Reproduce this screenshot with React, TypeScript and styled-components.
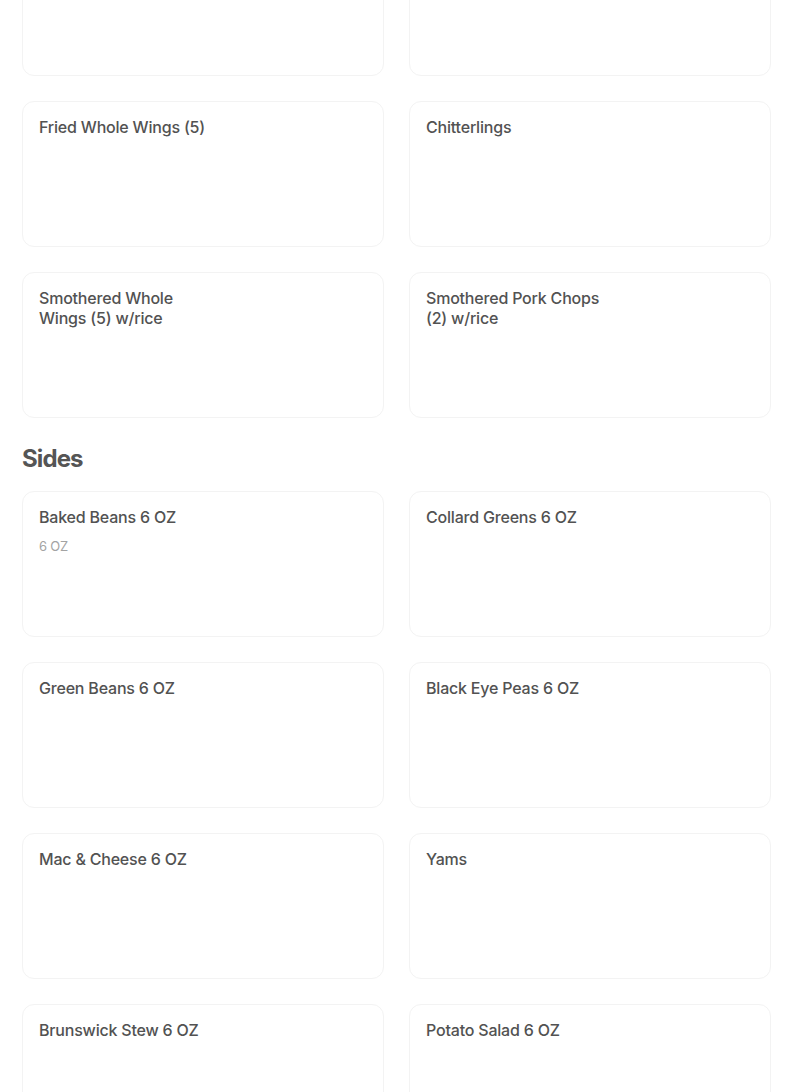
import React from "react";
import styled, { createGlobalStyle } from "styled-components";

const Global = createGlobalStyle`
  html, body { margin: 0; padding: 0; background: #ffffff; }
  body { font-family: Inter, "Noto Sans", Arial, sans-serif; overflow: hidden; }
`;

const Page = styled.div`
  padding: 0 33px 0 22px;
  margin-top: -70px;
  display: flex;
  flex-direction: column;
`;

const Grid = styled.div`
  display: grid;
  grid-template-columns: 1fr 1fr;
  column-gap: 25px;
  row-gap: 25px;
`;

const Card = styled.div`
  box-sizing: border-box;
  height: 146px;
  border: 1px solid #f3f3f3;
  border-radius: 12px;
  padding: 15px 16px;
  display: flex;
  flex-direction: column;
  gap: 11px;
  background: #fff;
`;

const Title = styled.div`
  font-size: 16px;
  line-height: 20px;
  font-weight: 500;
  color: #525252;
  letter-spacing: -0.2px;
  max-width: 180px;
`;

const Sub = styled.div`
  font-size: 13px;
  line-height: 16px;
  color: #a3a3a3;
  letter-spacing: -0.2px;
`;

const Heading = styled.h2`
  margin: 25px 0 16px;
  font-size: 24px;
  line-height: 32px;
  font-weight: 700;
  color: #555555;
  letter-spacing: -0.9px;
`;

type Item = { title: string; sub?: string };

const top: Item[] = [
  { title: "" },
  { title: "" },
  { title: "Fried Whole Wings (5)" },
  { title: "Chitterlings" },
  { title: "Smothered Whole Wings (5) w/rice" },
  { title: "Smothered Pork Chops (2) w/rice" },
];

const sides: Item[] = [
  { title: "Baked Beans 6 OZ", sub: "6 OZ" },
  { title: "Collard Greens 6 OZ" },
  { title: "Green Beans 6 OZ" },
  { title: "Black Eye Peas 6 OZ" },
  { title: "Mac & Cheese 6 OZ" },
  { title: "Yams" },
  { title: "Brunswick Stew 6 OZ" },
  { title: "Potato Salad 6 OZ" },
];

const renderCards = (items: Item[]) =>
  items.map((it, i) => (
    <Card key={i}>
      {it.title && <Title>{it.title}</Title>}
      {it.sub && <Sub>{it.sub}</Sub>}
    </Card>
  ));

export default function App() {
  return (
    <>
      <Global />
      <Page>
        <Grid>{renderCards(top)}</Grid>
        <Heading>Sides</Heading>
        <Grid>{renderCards(sides)}</Grid>
      </Page>
    </>
  );
}
